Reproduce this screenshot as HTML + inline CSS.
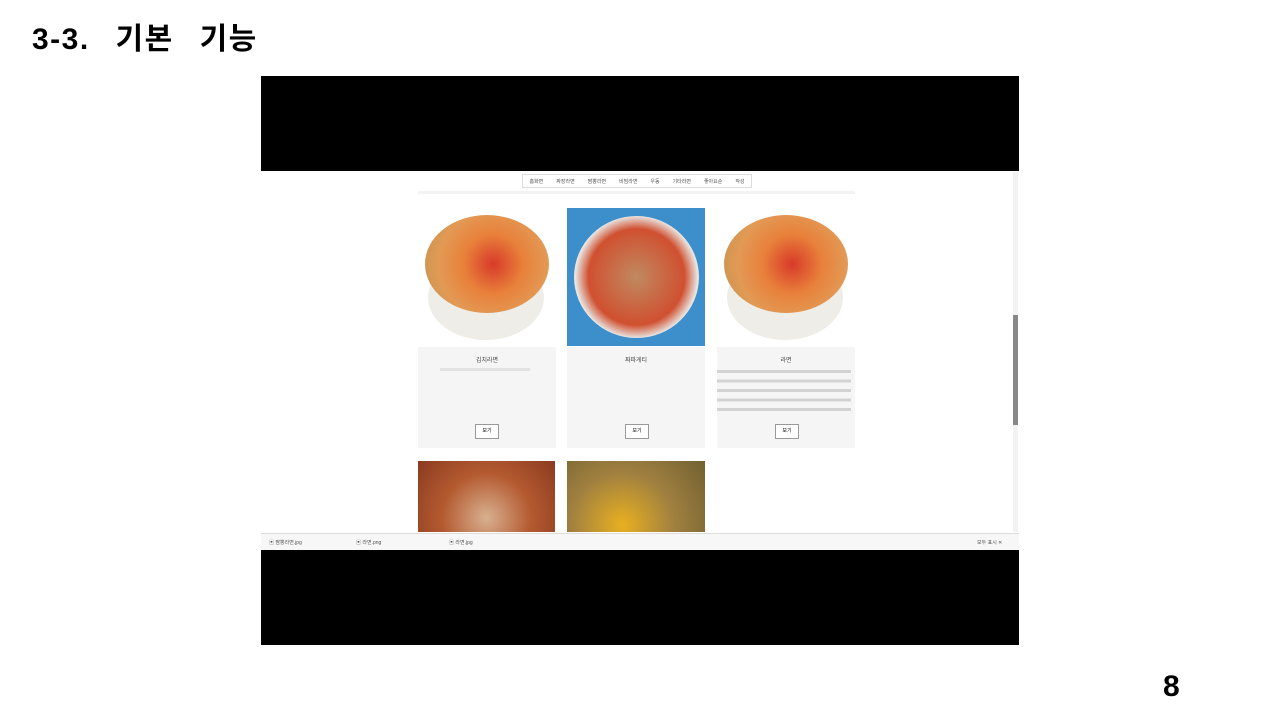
<!DOCTYPE html>
<html><head><meta charset="utf-8"><style>
body{margin:0;width:1280px;height:720px;background:#fff;position:relative;overflow:hidden;font-family:"Liberation Sans","Noto Sans CJK KR",sans-serif}
.a{position:absolute}
.title{left:32px;top:14px;font-size:30px;font-weight:bold;letter-spacing:1.5px;color:#000;word-spacing:16px}
.num{left:1163px;top:670px;font-size:30px;font-weight:bold}
.bowl{border-radius:50%;}
.info{background:#f5f5f5;height:101px;top:347px;width:138px}
.btn{width:22px;height:13px;border:1px solid #999;background:#fff;font-size:5px;text-align:center;line-height:13px;top:424px}
</style></head><body>
<div class="a title">3-3. 기본 기능</div>
<div class="a num">8</div>
<div class="a" style="left:261px;top:76px;width:758px;height:569px;background:#000"></div>
<div class="a" style="left:261px;top:171px;width:758px;height:379px;background:#fff"></div>
<div class="a" style="left:522px;top:174px;width:228px;height:12px;border:1px solid #ddd;font-size:5px;color:#555;display:flex;justify-content:space-around;align-items:center"><span>홈화면</span><span>짜장라면</span><span>짬뽕라면</span><span>비빔라면</span><span>우동</span><span>기타라면</span><span>좋아요순</span><span>작성</span></div>
<div class="a" style="left:418px;top:191px;width:437px;height:3px;background:#f3f3f3"></div>
<div class="a" style="left:1013px;top:172px;width:5px;height:360px;background:#f2f2f2"></div>
<div class="a" style="left:1013px;top:315px;width:5px;height:110px;background:#888"></div>
<!-- col1 -->
<div class="a bowl" style="left:428px;top:255px;width:116px;height:85px;background:#efede8"></div>
<div class="a bowl" style="left:425px;top:215px;width:124px;height:98px;background:radial-gradient(circle at 55% 50%,#d83a2a 0%,#e8803a 35%,#e29a55 65%,#c89550 88%,#f5efe0 94%)"></div>
<div class="a info" style="left:418px"></div>
<div class="a" style="left:418px;top:355px;width:138px;text-align:center;font-size:6px;color:#444">김치라면</div>
<div class="a" style="left:440px;top:368px;width:90px;height:3px;background:#e2e2e2"></div>
<div class="a btn" style="left:475px">보기</div>
<!-- col2 -->
<div class="a" style="left:567px;top:208px;width:138px;height:138px;background:#3d8fcc"></div>
<div class="a bowl" style="left:574px;top:216px;width:125px;height:122px;background:radial-gradient(circle,#c08a60 0%,#d05030 55%,#e8e4e0 70%,#f4f4f4 80%,transparent 81%)"></div>
<div class="a info" style="left:567px"></div>
<div class="a" style="left:567px;top:355px;width:138px;text-align:center;font-size:6px;color:#444">짜파게티</div>
<div class="a btn" style="left:625px">보기</div>
<!-- col3 -->
<div class="a bowl" style="left:727px;top:255px;width:116px;height:85px;background:#efede8"></div>
<div class="a bowl" style="left:724px;top:215px;width:124px;height:98px;background:radial-gradient(circle at 55% 50%,#d83a2a 0%,#e8803a 35%,#e29a55 65%,#c89550 88%,#f5efe0 94%)"></div>
<div class="a info" style="left:717px"></div>
<div class="a" style="left:717px;top:355px;width:138px;text-align:center;font-size:6px;color:#444">라면</div>
<div class="a" style="left:717px;top:368px;width:134px;height:48px;background:repeating-linear-gradient(#fff0 0 2px,#bbb 2px 5px,#fff0 5px 9.5px);opacity:.6"></div>
<div class="a btn" style="left:775px">보기</div>
<!-- row2 -->
<div class="a" style="left:418px;top:461px;width:137px;height:71px;background:radial-gradient(circle at 50% 80%,#d8b090,#b45a30 50%,#8a3a20)"></div>
<div class="a" style="left:567px;top:461px;width:138px;height:71px;background:radial-gradient(circle at 40% 90%,#e8b020,#a08040 50%,#706030)"></div>
<div class="a" style="left:261px;top:533px;width:758px;height:16px;background:#f7f7f7;border-top:1px solid #ddd;font-size:5px;color:#555">
<span class="a" style="left:8px;top:5px">▣ 짬뽕라면.jpg</span><span class="a" style="left:95px;top:5px">▣ 라면.png</span><span class="a" style="left:188px;top:5px">▣ 라면.jpg</span><span class="a" style="left:716px;top:5px">모두 표시 ✕</span></div>
</body></html>
